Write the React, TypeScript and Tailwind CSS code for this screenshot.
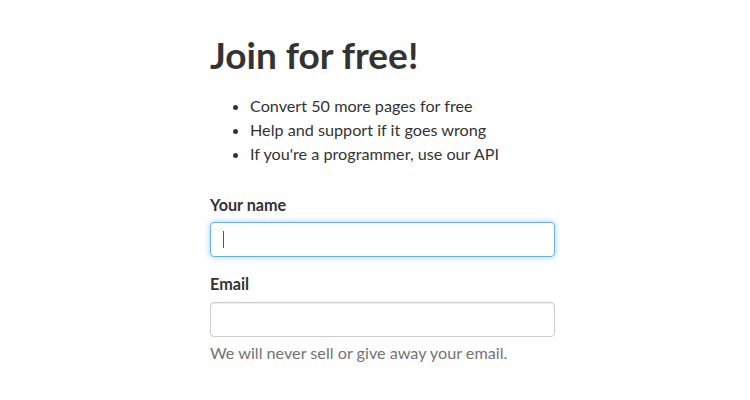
import React from "react";

export default function App() {
  return (
    <div className="min-h-[400px] w-[750px] bg-white text-[#333] font-['Lato',sans-serif]">
      <div className="pl-[210px] pt-[31px]">
        <div className="w-[345px]">
          <h1 className="text-[37px] font-bold leading-[48px]">Join for free!</h1>
          <ul className="mt-[15px] list-disc pl-[40px] text-[16.2px] leading-[24px]">
            <li>Convert 50 more pages for free</li>
            <li>Help and support if it goes wrong</li>
            <li>If you're a programmer, use our API</li>
          </ul>

          <form className="mt-[27px]">
            <label className="mb-[5px] block text-[16.2px] font-bold leading-[24px]" htmlFor="name">
              Your name
            </label>
            <div className="relative">
              <input
                id="name"
                type="text"
                className="block h-[35px] w-full rounded-[4px] border border-[#66afe9] px-3 text-[16px] outline-none shadow-[0_0_6px_rgba(102,175,233,0.6)]"
              />
              {/* fake caret, the field is shown focused */}
              <span className="pointer-events-none absolute left-[13px] top-[9px] h-[17px] w-px bg-[#555]" />
            </div>

            <label className="mb-[6px] mt-[15px] block text-[16.2px] font-bold leading-[24px]" htmlFor="email">
              Email
            </label>
            <input
              id="email"
              type="email"
              className="block h-[35px] w-full rounded-[4px] border border-[#ccc] px-3 text-[16px] outline-none shadow-[inset_0_1px_1px_rgba(0,0,0,0.075)]"
            />
            <p className="mt-[4px] text-[16.2px] leading-[24px] text-[#737373]">
              We will never sell or give away your email.
            </p>
          </form>
        </div>
      </div>
    </div>
  );
}
